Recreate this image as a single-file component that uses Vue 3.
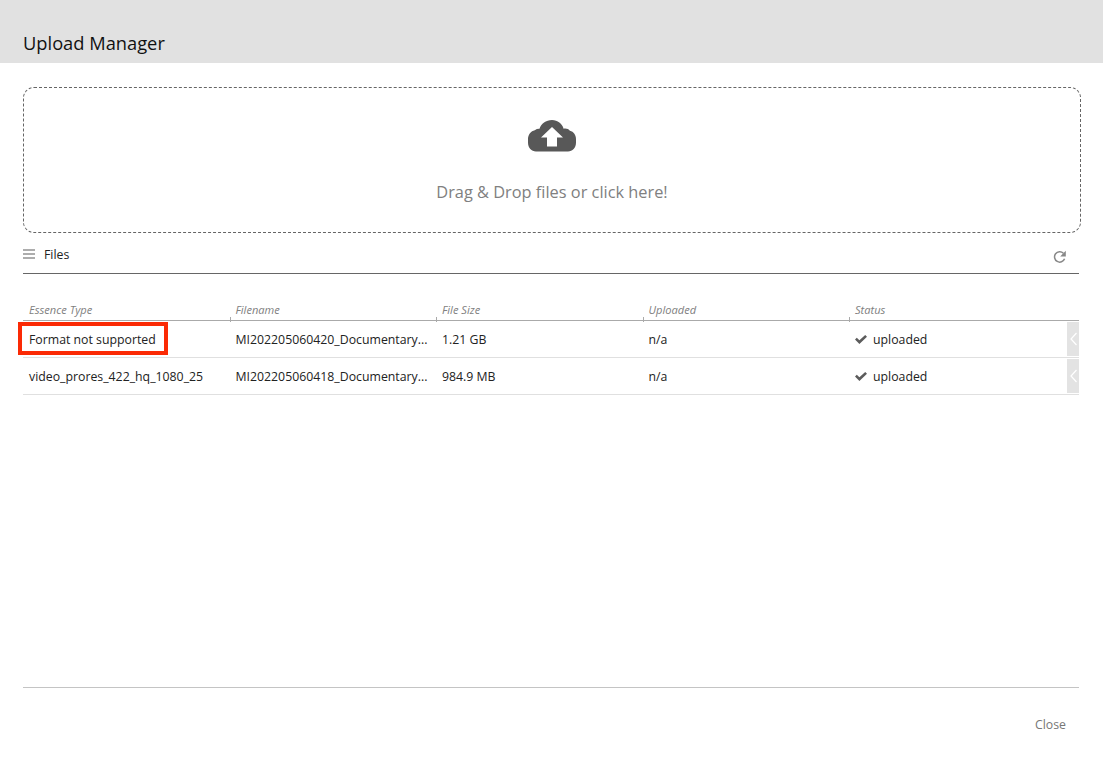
<template>
  <div class="manager">
    <header class="manager__head">
      <h1 class="manager__title">Upload Manager</h1>
    </header>

    <main class="manager__body">
      <div class="dropzone">
        <svg class="dropzone__icon" viewBox="0 0 48 34" width="48" height="34">
          <path
            fill="#585858"
            d="M24 0c5.600 0 10.200 3.600 11.600 8.700.5-.1 1-.2 1.600-.2 2 0 3.600.8 4.700 2.200C45.700 11.600 48 15 48 19v3.500C48 27.900 44.500 31.500 40 31.500H8c-4.500 0-8-3.600-8-9V19c0-4.500 3-8 6.800-8.800C8.200 9.200 9.800 8.700 11.500 8.800 13 3.600 18 0 24 0z"
          />
          <path fill="#fff" d="M24 7 35 17.500H29V26.500H19V17.500H13z" />
        </svg>
        <div class="dropzone__text">Drag &amp; Drop files or click here!</div>
      </div>

      <div class="toolbar">
        <div class="toolbar__left">
          <svg viewBox="0 0 12 10" width="12" height="10">
            <path d="M0 1h12M0 5h12M0 9h12" stroke="#5c5c5c" stroke-width="1.200" fill="none" />
          </svg>
          <span>Files</span>
        </div>
        <svg class="toolbar__refresh" viewBox="0 0 14 14" width="14" height="14">
          <path d="M11.600 8.800A5.200 5.200 0 1 1 10.400 3.200" fill="none" stroke="#888" stroke-width="1.500" />
          <path d="M12.800 0.800V6.400H7.200z" fill="#888" />
        </svg>
      </div>

      <div class="table">
        <div class="table__row table__row--head">
          <div v-for="col in columns" :key="col" class="table__th">{{ col }}</div>
        </div>
        <div v-for="row in rows" :key="row.filename" class="table__row">
          <div class="table__td">{{ row.type }}</div>
          <div class="table__td">{{ row.filename }}</div>
          <div class="table__td">{{ row.size }}</div>
          <div class="table__td">{{ row.uploaded }}</div>
          <div class="table__td table__td--status">
            <svg viewBox="0 0 12 9" width="12" height="9">
              <path d="M0 4.500 1.800 2.700 4.400 5.200 10.200 0 12 1.800 4.400 9z" fill="#5c5c5c" />
            </svg>
            <span>{{ row.status }}</span>
          </div>
          <div class="table__handle">
            <svg viewBox="0 0 7 14" width="7" height="14">
              <path d="M6.500 1 1 7 6.500 13" fill="none" stroke="#fff" stroke-width="1.200" />
            </svg>
          </div>
        </div>
        <div class="table__mark"></div>
      </div>
    </main>

    <footer class="manager__foot">
      <span class="manager__close">Close</span>
    </footer>
  </div>
</template>

<script setup>
const columns = ['Essence Type', 'Filename', 'File Size', 'Uploaded', 'Status']

const rows = [
  {
    type: 'Format not supported',
    filename: 'MI202205060420_Documentary...',
    size: '1.21 GB',
    uploaded: 'n/a',
    status: 'uploaded',
  },
  {
    type: 'video_prores_422_hq_1080_25',
    filename: 'MI202205060418_Documentary...',
    size: '984.9 MB',
    uploaded: 'n/a',
    status: 'uploaded',
  },
]
</script>

<style scoped>
.manager {
  display: flex;
  flex-direction: column;
  height: 759px;
  overflow: hidden;
  background: #fff;
  color: #222;
  font-family: 'Open Sans', sans-serif;
  font-size: 12.300px;
}

.manager__head {
  display: flex;
  align-items: flex-end;
  height: 63px;
  box-sizing: border-box;
  padding: 0 23px 8px;
  background: #e1e1e1;
}

.manager__title {
  margin: 0;
  color: #111;
  font-size: 18.300px;
  font-weight: 400;
  line-height: 24px;
}

.manager__body {
  flex: 1;
  padding: 24px 24px 0 23px;
}

.dropzone {
  display: flex;
  flex-direction: column;
  align-items: center;
  box-sizing: border-box;
  width: 1058px;
  height: 146px;
  padding-top: 32px;
  border: 1px dashed #666;
  border-radius: 11px;
}

.dropzone__text {
  margin-top: 27px;
  color: #808080;
  font-size: 16.350px;
  line-height: 22px;
}

.toolbar {
  display: flex;
  align-items: center;
  justify-content: space-between;
  height: 41px;
  box-sizing: border-box;
  padding: 2px 12px 0 0;
  border-bottom: 1px solid #666;
}

.toolbar__left {
  display: flex;
  align-items: center;
  gap: 9px;
}

.toolbar__refresh {
  margin-top: 5px;
}

.table {
  position: relative;
  margin-top: 23px;
}

.table__row {
  position: relative;
  display: grid;
  grid-template-columns: 206.500px 206.500px 206.500px 206.500px 1fr;
  height: 37px;
  box-sizing: border-box;
  align-items: center;
  border-bottom: 1px solid #e0e0e0;
}

.table__row--head {
  height: 24px;
  align-items: stretch;
  border-bottom: 1px solid #aaa;
}

.table__th {
  position: relative;
  padding: 1px 6px 0;
  color: #808080;
  font-size: 11.100px;
  font-style: italic;
  line-height: 24px;
}

.table__th:not(:first-child)::before {
  content: '';
  position: absolute;
  left: 0;
  bottom: 0;
  height: 5px;
  border-left: 1px solid #aaa;
}

.table__td {
  padding: 0 6px;
  white-space: nowrap;
}

.table__td--status {
  display: flex;
  align-items: center;
  gap: 6px;
}

.table__handle {
  position: absolute;
  top: 1px;
  right: 0;
  display: flex;
  align-items: center;
  justify-content: center;
  width: 12px;
  height: 34px;
  background: #e3e3e3;
}

.table__mark {
  position: absolute;
  left: -5px;
  top: 25px;
  width: 150px;
  height: 33px;
  box-sizing: border-box;
  border: 4px solid #fb2a05;
}

.manager__foot {
  display: flex;
  justify-content: flex-end;
  height: 72px;
  box-sizing: border-box;
  margin: 0 24px 0 23px;
  padding: 28px 13px 0 0;
  border-top: 1px solid #c4c4c4;
}

.manager__close {
  color: #777;
  line-height: 18px;
}
</style>
